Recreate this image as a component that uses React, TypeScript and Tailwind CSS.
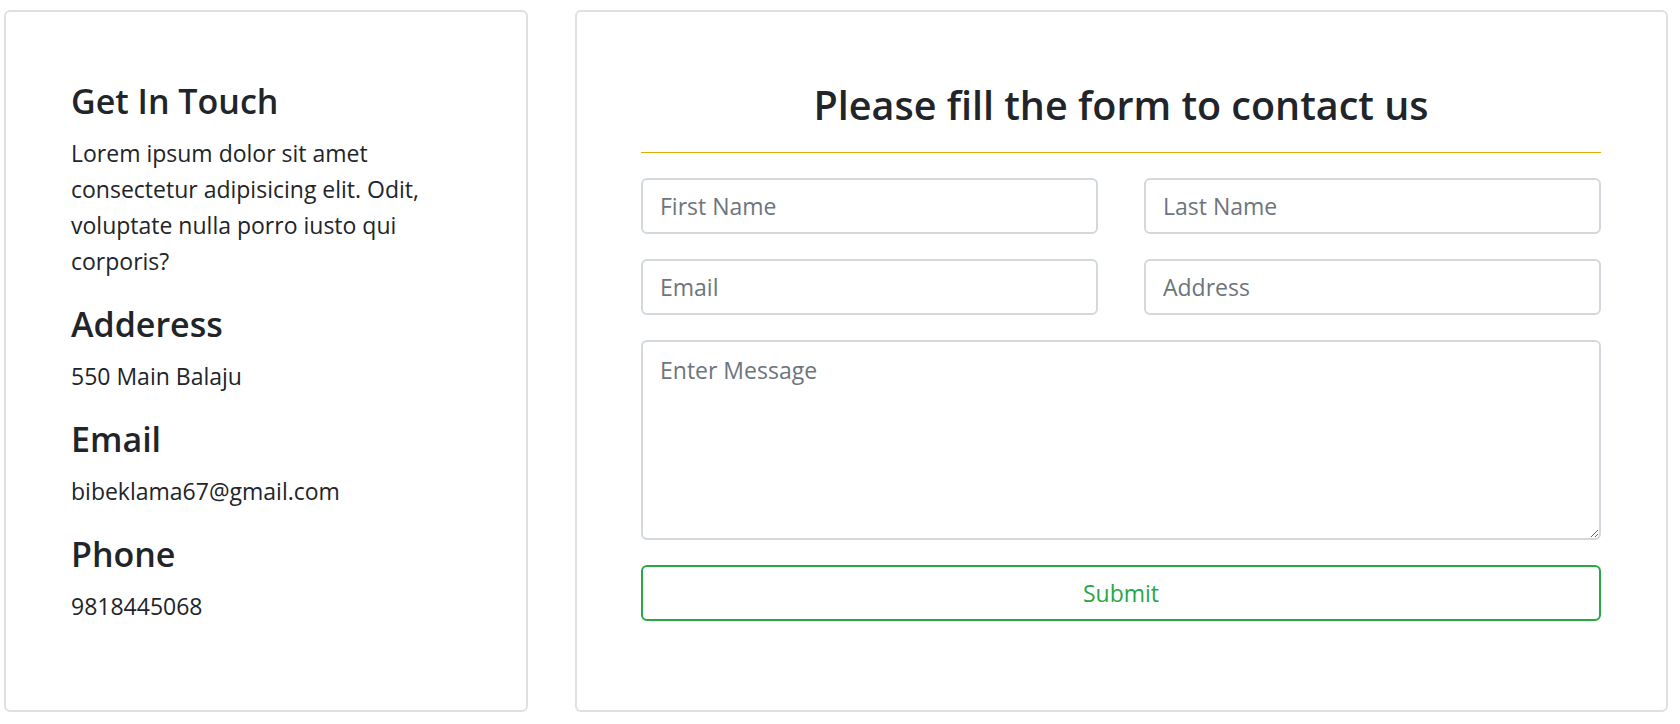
const font = { fontFamily: '"Segoe UI", "Open Sans", "Noto Sans", sans-serif' };

const contactInfo = [
  { title: 'Adderess', value: '550 Main Balaju' },
  { title: 'Email', value: 'bibeklama67@gmail.com' },
  { title: 'Phone', value: '9818445068' },
];

function Field({ placeholder }: { placeholder: string }) {
  return (
    <input
      type="text"
      placeholder={placeholder}
      className="h-[56px] w-full rounded-[6px] border-2 border-[#d3d8dd] bg-white px-[17px] text-[23px] text-[#495057] outline-none placeholder:text-[#6c757d]"
    />
  );
}

export default function App() {
  return (
    <div className="min-h-[724px] w-full bg-white text-[#212529]" style={font}>
      <div className="flex items-start pt-[10px]">
        <aside className="ml-[4px] h-[702px] w-[524px] shrink-0 rounded-[6px] border-2 border-[#e0e0e0] pl-[65px] pr-[40px] pt-[68px]">
          <h4 className="mb-[12px] text-[34px] font-semibold leading-[43px]">Get In Touch</h4>
          <p className="mb-[24px] text-[23px] leading-[36px]">
            Lorem ipsum dolor sit amet consectetur adipisicing elit. Odit, voluptate nulla porro iusto qui corporis?
          </p>
          {contactInfo.map((c) => (
            <div key={c.title}>
              <h4 className="mb-[12px] text-[34px] font-semibold leading-[43px]">{c.title}</h4>
              <p className="mb-[24px] text-[23px] leading-[36px]">{c.value}</p>
            </div>
          ))}
        </aside>

        <section className="ml-[47px] h-[702px] w-[1093px] shrink-0 rounded-[6px] border-2 border-[#e0e0e0] pl-[64px] pr-[65px] pt-[68px]">
          <h3 className="text-center text-[39.5px] font-semibold leading-[50px]">Please fill the form to contact us</h3>
          <div className="mt-[22px] h-px w-full bg-[#e5ab00]" />
          <form className="mt-[25px] flex flex-col">
            <div className="grid grid-cols-2 gap-x-[46px]">
              <Field placeholder="First Name" />
              <Field placeholder="Last Name" />
            </div>
            <div className="mt-[25px] grid grid-cols-2 gap-x-[46px]">
              <Field placeholder="Email" />
              <Field placeholder="Address" />
            </div>
            <textarea
              placeholder="Enter Message"
              className="mt-[25px] h-[200px] w-full rounded-[6px] border-2 border-[#d3d8dd] bg-white px-[17px] pt-[10px] text-[23px] leading-[36px] text-[#495057] outline-none placeholder:text-[#6c757d]"
            />
            <button
              type="button"
              className="mt-[25px] h-[56px] w-full rounded-[6px] border-2 border-[#28a745] bg-white text-[23px] text-[#28a745]"
            >
              Submit
            </button>
          </form>
        </section>
      </div>
    </div>
  );
}
